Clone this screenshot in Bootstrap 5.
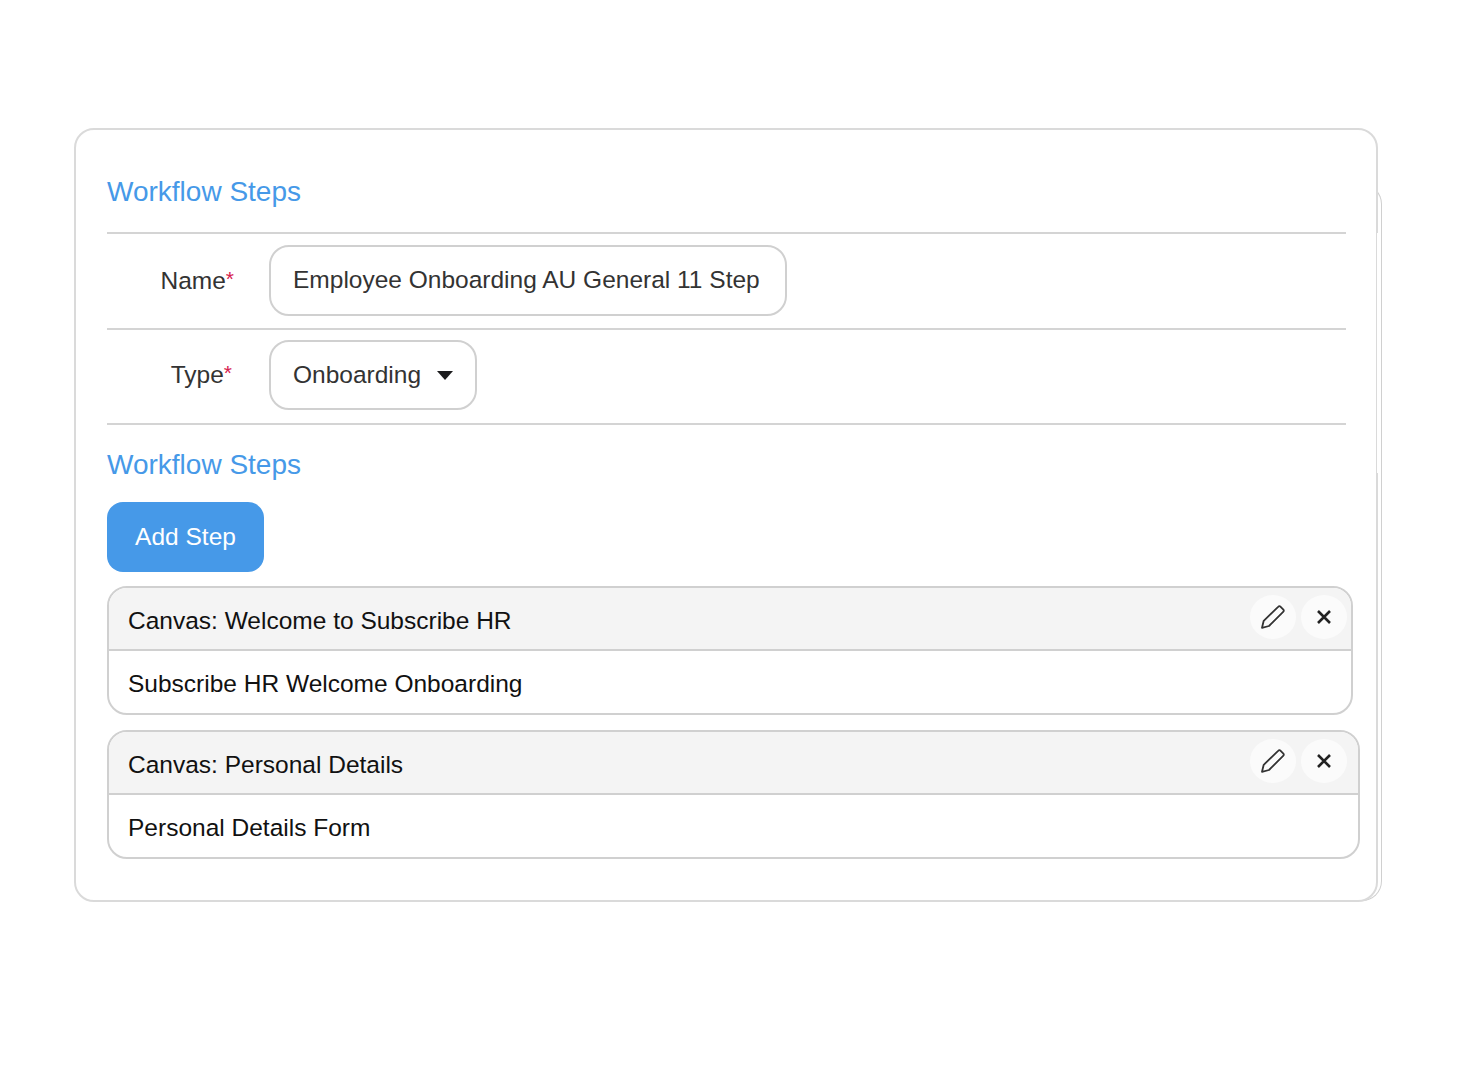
<!DOCTYPE html>
<html lang="en">
<head>
<meta charset="utf-8">
<title>Workflow Steps</title>
<link href="https://cdn.jsdelivr.net/npm/bootstrap@5.3.0/dist/css/bootstrap.min.css" rel="stylesheet">
<style>
body{background:#fff;font-family:"Liberation Sans",Arial,sans-serif;color:#333;margin:0;height:1081px;overflow:hidden}
.stage{position:relative;width:1304px;height:774px;margin:128px 0 0 74px}
.back-sheet{position:absolute;left:1000px;top:56px;width:308px;height:717px;border:1px solid #d0d0d0;border-left:0;border-radius:0 20px 20px 0}
.sheet{position:relative;height:774px;background:#fff;border:2px solid #dadada;border-radius:20px;padding:30px 30px 0 31px}
.edge-fade{position:absolute;right:-2px;top:103px;width:1px;height:240px;background:#fff}
.wf-title{font-size:28px;line-height:32px;color:#4699e8;margin:16px 0 0;font-weight:400}
.wf-rule{height:2px;background:#d4d4d4;margin:0}
.wf-row{display:flex;align-items:flex-start;height:94px;padding-top:11px;font-size:24.5px}
.wf-row.next{height:93px;padding-top:10px}
.wf-row.next .wf-label{padding-right:2px;line-height:70px}
.wf-row.next .wf-input{height:70px}
.wf-label{width:127px;line-height:71px;text-align:right;margin:0;color:#333}
.wf-label b{color:#d6204e;font-weight:400;font-size:21px;position:relative;top:-3px}
.wf-input{margin-left:35px;height:71px;border:2px solid #d0d0d0;border-radius:20px;background:#fff;padding:0 25px 0 22px;display:flex;align-items:center;color:#333}
.wf-input.pick{padding-right:22px}
.wf-caret{display:inline-block;width:0;height:0;border-left:8.5px solid transparent;border-right:8.5px solid transparent;border-top:9px solid #1c1c1e;margin-left:16px}
.wf-add{background:#4699e8;color:#fff;border:0;border-radius:16px;width:157px;height:70px;font-size:24.5px;padding:0;margin:21px 0 14px}
.wf-add:hover{background:#4699e8;color:#fff}
.wf-panel{border:2px solid #d0d0d0;border-radius:20px;font-size:24.5px;color:#111;margin-bottom:15px;overflow:hidden;background:#fff}
.wf-head{position:relative;height:63px;background:#f4f4f4;border-bottom:2px solid #d0d0d0;padding:18px 19px 0;line-height:30px}
.wf-body{height:62px;padding:18px 19px 0;line-height:30px}
.wf-tools{position:absolute;top:7px;right:4px;display:flex;gap:5px}
.wf-tools.far{right:11px}
.wf-tool{width:46px;height:44px;border:0;border-radius:50%;background:#fbfbfb;padding:0;display:flex;align-items:center;justify-content:center}
.w1{margin-right:-7px}
.w2{margin-right:-14px}
</style>
</head>
<body>
<div class="stage">
  <div class="back-sheet"></div>
  <div class="sheet">
    <div class="edge-fade"></div>
    <h2 class="wf-title">Workflow Steps</h2>
    <div class="wf-rule mt-4"></div>
    <div class="wf-row">
      <label class="wf-label">Name<b>*</b></label>
      <div class="wf-input">Employee Onboarding AU General 11 Step</div>
    </div>
    <div class="wf-rule"></div>
    <div class="wf-row next">
      <label class="wf-label">Type<b>*</b></label>
      <div class="wf-input pick">Onboarding<span class="wf-caret"></span></div>
    </div>
    <div class="wf-rule"></div>
    <h2 class="wf-title mt-4">Workflow Steps</h2>
    <button class="btn wf-add" type="button">Add Step</button>
    <div class="wf-panel w1">
      <div class="wf-head">Canvas: Welcome to Subscribe HR
        <div class="wf-tools">
          <button class="wf-tool" type="button" aria-label="Edit"><svg width="24" height="24" viewBox="0 0 24 24" fill="none" stroke="#333" stroke-width="1.8" stroke-linejoin="round"><path d="M1 22.8l1.7-7L17.4 1.6a1.4 1.4 0 0 1 2 0l3 3a1.4 1.4 0 0 1 0 2L8 21z"/></svg></button>
          <button class="wf-tool" type="button" aria-label="Remove"><svg width="16" height="16" viewBox="0 0 16 16" fill="none" stroke="#222" stroke-width="2.6"><path d="M2 2l12 12M14 2L2 14"/></svg></button>
        </div>
      </div>
      <div class="wf-body">Subscribe HR Welcome Onboarding</div>
    </div>
    <div class="wf-panel w2">
      <div class="wf-head">Canvas: Personal Details
        <div class="wf-tools far">
          <button class="wf-tool" type="button" aria-label="Edit"><svg width="24" height="24" viewBox="0 0 24 24" fill="none" stroke="#333" stroke-width="1.8" stroke-linejoin="round"><path d="M1 22.8l1.7-7L17.4 1.6a1.4 1.4 0 0 1 2 0l3 3a1.4 1.4 0 0 1 0 2L8 21z"/></svg></button>
          <button class="wf-tool" type="button" aria-label="Remove"><svg width="16" height="16" viewBox="0 0 16 16" fill="none" stroke="#222" stroke-width="2.6"><path d="M2 2l12 12M14 2L2 14"/></svg></button>
        </div>
      </div>
      <div class="wf-body">Personal Details Form</div>
    </div>
  </div>
</div>
<script src="https://cdn.jsdelivr.net/npm/bootstrap@5.3.0/dist/js/bootstrap.bundle.min.js"></script>
</body>
</html>
